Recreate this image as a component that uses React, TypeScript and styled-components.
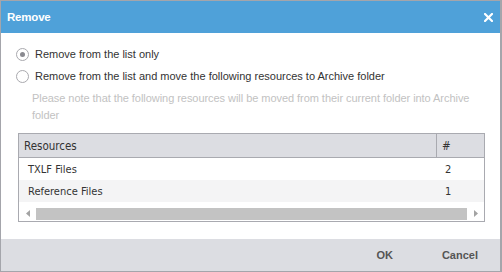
import styled, { createGlobalStyle } from "styled-components";

const GlobalStyle = createGlobalStyle`
  html, body {
    margin: 0;
    padding: 0;
    background: #ffffff;
  }
  * {
    box-sizing: border-box;
  }
`;

const Dialog = styled.div`
  width: 502px;
  height: 272px;
  border: 1px solid #a4a5ab;
  border-right-width: 2px;
  display: flex;
  flex-direction: column;
  font-family: "Liberation Sans", Arial, sans-serif;
  background: #ffffff;
`;

const Header = styled.div`
  height: 32px;
  background: #4fa1d9;
  display: flex;
  align-items: center;
  justify-content: space-between;
  padding: 0 7px 0 6px;
  color: #ffffff;
`;

const Title = styled.span`
  font-size: 11.5px;
  font-weight: bold;
  letter-spacing: -0.2px;
`;

const CloseButton = styled.button`
  border: 0;
  background: transparent;
  padding: 0;
  width: 10px;
  height: 10px;
  display: flex;
  align-items: center;
  justify-content: center;
  cursor: pointer;
`;

const Body = styled.div`
  flex: 1;
  padding: 10px 15px 0 15px;
  display: flex;
  flex-direction: column;
`;

const Option = styled.label`
  height: 22px;
  display: flex;
  align-items: center;
  gap: 6px;
  font-size: 11px;
  color: #333333;
`;

const Radio = styled.span<{ $checked?: boolean }>`
  width: 13px;
  height: 13px;
  border-radius: 50%;
  border: 1px solid #a9a9ae;
  background: #ffffff;
  display: flex;
  align-items: center;
  justify-content: center;

  &::after {
    content: "";
    width: 5px;
    height: 5px;
    border-radius: 50%;
    background: ${(p) => (p.$checked ? "#8a8a90" : "transparent")};
  }
`;

const Note = styled.p`
  margin: 3px 2px 0 16px;
  font-size: 11px;
  line-height: 17px;
  color: #c2c2c2;
  letter-spacing: -0.05px;
`;

const Table = styled.div`
  margin: 9px 0 0 2px;
  border: 1px solid #a9aab0;
  font-family: "DejaVu Sans Condensed", "DejaVu Sans", sans-serif;
  font-size: 11px;
  color: #333333;
`;

const HeadRow = styled.div`
  display: grid;
  grid-template-columns: 1fr 48px;
  height: 24px;
  background: #dcdde2;
  border-bottom: 1px solid #a9aab0;
  font-size: 11.5px;
`;

const HeadCell = styled.div<{ $last?: boolean }>`
  display: flex;
  align-items: center;
  padding-left: 5px;
  border-left: ${(p) => (p.$last ? "1px solid #a9aab0" : "0")};
`;

const Row = styled.div<{ $alt?: boolean }>`
  display: grid;
  grid-template-columns: 1fr 48px;
  height: 22px;
  background: ${(p) => (p.$alt ? "#f4f4f5" : "#ffffff")};
`;

const Cell = styled.div`
  display: flex;
  align-items: center;
  padding-left: 9px;
`;

const Scrollbar = styled.div`
  display: flex;
  align-items: center;
  height: 19px;
  padding-top: 4px;
  background: #ffffff;
`;

const Arrow = styled.div`
  width: 17px;
  height: 12px;
  display: flex;
  align-items: center;
  justify-content: center;
`;

const Thumb = styled.div`
  flex: 1;
  height: 12px;
  background: #c3c3c3;
`;

const Footer = styled.div`
  height: 32px;
  background: #dcdde2;
  display: flex;
  align-items: center;
  justify-content: flex-end;
  gap: 49px;
  padding-right: 22px;
`;

const FooterButton = styled.button`
  border: 0;
  background: transparent;
  font-family: "Liberation Sans", Arial, sans-serif;
  font-size: 11px;
  font-weight: bold;
  color: #555555;
  padding: 0;
  cursor: pointer;
`;

const resources = [
  { name: "TXLF Files", count: 2 },
  { name: "Reference Files", count: 1 },
];

export default function App() {
  return (
    <>
      <GlobalStyle />
      <Dialog>
        <Header>
          <Title>Remove</Title>
          <CloseButton aria-label="Close">
            <svg width="9" height="9" viewBox="0 0 9 9">
              <path
                d="M1 1 L8 8 M8 1 L1 8"
                stroke="#ffffff"
                strokeWidth="2.2"
                strokeLinecap="square"
              />
            </svg>
          </CloseButton>
        </Header>
        <Body>
          <Option>
            <Radio $checked />
            Remove from the list only
          </Option>
          <Option>
            <Radio />
            Remove from the list and move the following resources to Archive
            folder
          </Option>
          <Note>
            Please note that the following resources will be moved from their
            current folder into Archive folder
          </Note>
          <Table>
            <HeadRow>
              <HeadCell>Resources</HeadCell>
              <HeadCell $last>#</HeadCell>
            </HeadRow>
            {resources.map((r, i) => (
              <Row key={r.name} $alt={i % 2 === 1}>
                <Cell>{r.name}</Cell>
                <Cell>{r.count}</Cell>
              </Row>
            ))}
            <Scrollbar>
              <Arrow>
                <svg width="4" height="7" viewBox="0 0 4 7">
                  <path d="M4 0 L0 3.5 L4 7 Z" fill="#a3a3a3" />
                </svg>
              </Arrow>
              <Thumb />
              <Arrow>
                <svg width="4" height="7" viewBox="0 0 4 7">
                  <path d="M0 0 L4 3.5 L0 7 Z" fill="#a3a3a3" />
                </svg>
              </Arrow>
            </Scrollbar>
          </Table>
        </Body>
        <Footer>
          <FooterButton>OK</FooterButton>
          <FooterButton>Cancel</FooterButton>
        </Footer>
      </Dialog>
    </>
  );
}
